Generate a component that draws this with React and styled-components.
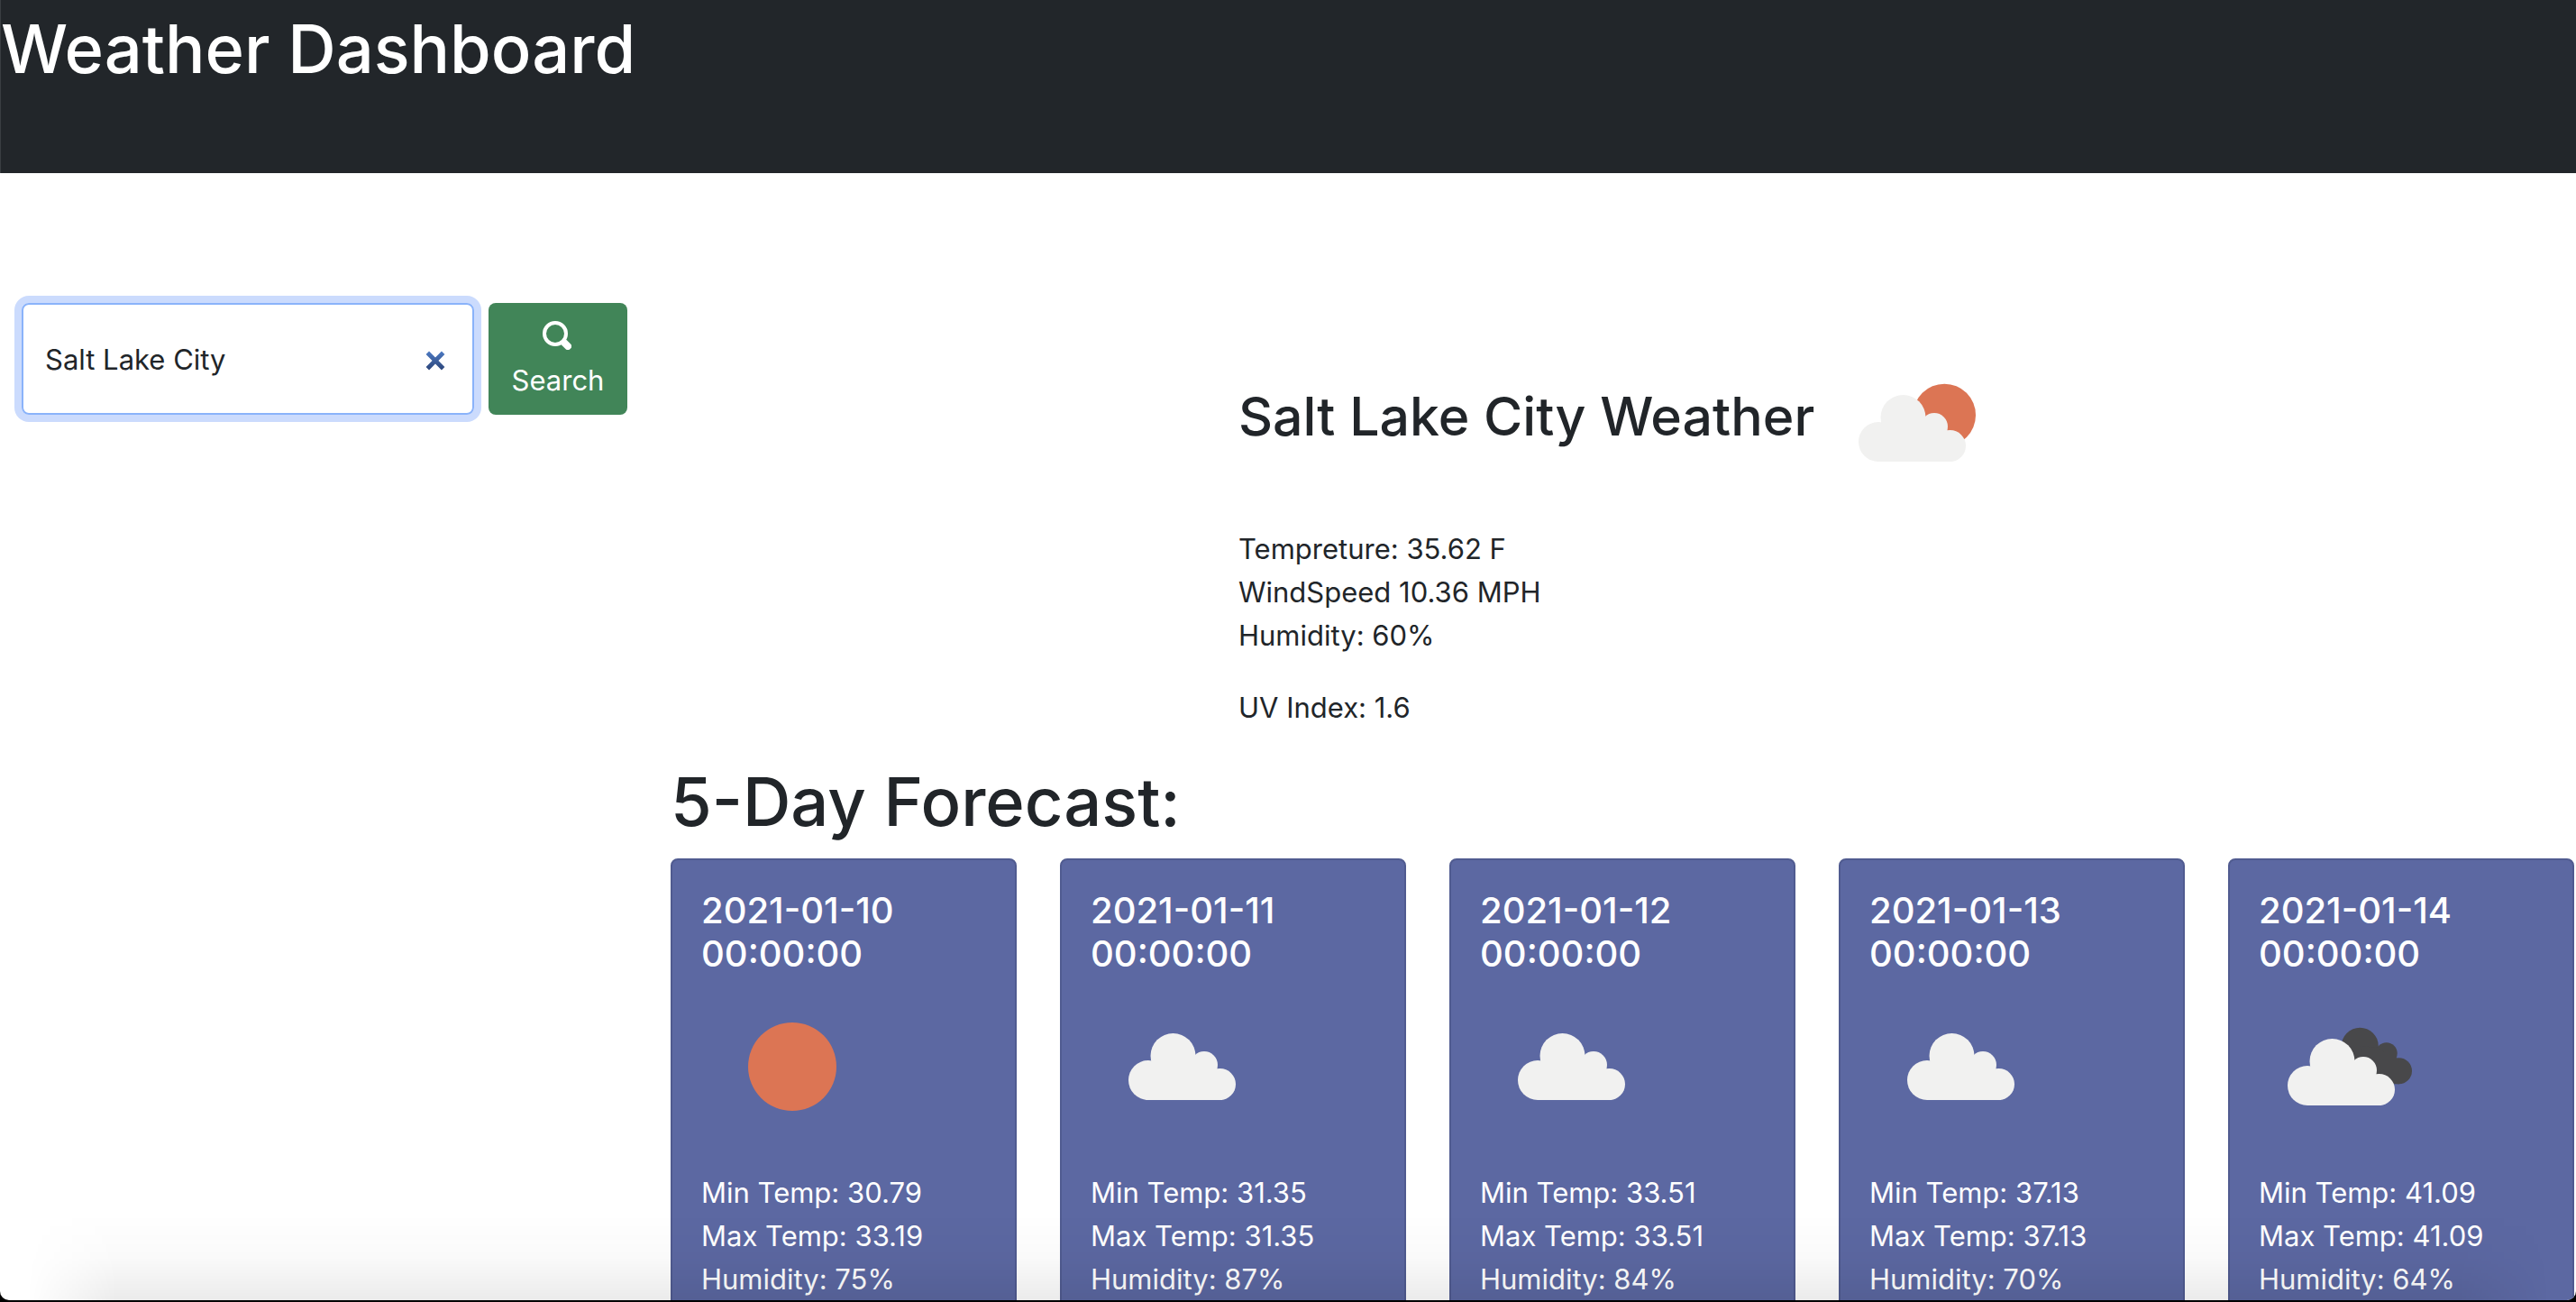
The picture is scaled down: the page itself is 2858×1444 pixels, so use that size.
import React, { useState } from "react";
import styled, { createGlobalStyle } from "styled-components";

const ink = "#212529";
const charcoal = "#22262a";

const GlobalStyle = createGlobalStyle`
  *, *::before, *::after { box-sizing: border-box; }
  body {
    margin: 0;
    background: #000;
    color: ${ink};
    font-family: Inter, "Liberation Sans", sans-serif;
    font-size: 31px;
    line-height: 48px;
  }
  h1, h2, h3, p { margin: 0; }
`;

const Window = styled.div`
  position: relative;
  height: calc(100vh - 2px);
  overflow: hidden;
  background: #fff;
  border-radius: 0 0 10px 10px;
`;

const Header = styled.header`
  height: 192px;
  padding-top: 6px;
  background: ${charcoal};
  border-left: 1px solid #3a3e42;
  color: #fff;
`;

const Heading = styled.h1`
  font-size: 74px;
  font-weight: 500;
  line-height: 96px;
`;

const Layout = styled.div`
  display: grid;
  grid-template-columns: 696px minmax(0, 1fr);
  column-gap: 24px;
  padding: 0 2px 0 24px;
`;

const SearchForm = styled.form`
  display: flex;
  align-items: stretch;
  align-self: start;
  gap: 16px;
  height: 124px;
  margin: 144px 24px 0 0;
`;

const SearchField = styled.div`
  flex: 1;
  display: flex;
  align-items: center;
  min-width: 0;
  padding: 2px 28px 0 24px;
  border: 2px solid #8ab3fa;
  border-radius: 8px;
  box-shadow: 0 0 0 8px #cbdbfd;
`;

const SearchInput = styled.input`
  flex: 1;
  min-width: 0;
  height: 48px;
  padding: 0;
  border: 0;
  outline: 0;
  background: none;
  color: ${ink};
  font: inherit;
`;

const ClearButton = styled.button`
  display: flex;
  padding: 2px 0 0;
  border: 0;
  background: none;
  cursor: pointer;
`;

const SearchButton = styled.button`
  display: flex;
  flex-direction: column;
  align-items: center;
  justify-content: center;
  width: 154px;
  padding: 0;
  border: 0;
  border-radius: 8px;
  background: #418558;
  color: #fff;
  font: inherit;
  cursor: pointer;
`;

const IconLine = styled.span`
  display: flex;
  align-items: center;
  height: 48px;
  padding: 0 2px 4px 0;
`;

const Main = styled.main`
  padding-top: 176px;
`;

const Current = styled.section`
  width: 852px;
  max-width: 100%;
  margin: 0 auto 32px;
`;

const CurrentTitle = styled.div`
  display: flex;
  align-items: center;
  gap: 17px;
  height: 200px;
  margin-bottom: 17px;
`;

const CityName = styled.h2`
  margin-bottom: 12px;
  font-size: 59px;
  font-weight: 500;
  line-height: 76px;
  white-space: nowrap;
`;

const UvIndex = styled.p`
  margin-top: 32px;
`;

const Cards = styled.div`
  display: grid;
  grid-template-columns: repeat(5, minmax(0, 1fr));
  gap: 48px;
  margin-top: 15px;
`;

const Card = styled.article`
  padding: 32px 32px 64px;
  border: 2px solid #505b90;
  border-radius: 8px;
  background: #5c68a2;
  color: #fff;
`;

const CardDate = styled.h3`
  font-size: 40px;
  font-weight: 500;
  line-height: 48px;
`;

const Picture = styled.svg`
  display: block;
  flex: none;
  width: 200px;
  height: 200px;
`;

const CardBody = styled.div`
  margin-top: 17px;
`;

const BottomShade = styled.div`
  position: absolute;
  inset: auto 0 0;
  height: 96px;
  background: linear-gradient(to bottom, rgba(0, 0, 0, 0), rgba(0, 0, 0, 0.02) 50%, rgba(0, 0, 0, 0.08));
  mask-image: linear-gradient(to right, transparent 30px, #000 130px, #000 calc(100% - 130px), transparent calc(100% - 30px));
  pointer-events: none;
`;

const Cloud = () => (
  <g fill="#f1f1f0">
    <circle cx="54" cy="122" r="22" />
    <circle cx="81.5" cy="95" r="25" />
    <circle cx="116" cy="105" r="15" />
    <circle cx="133.5" cy="126.5" r="17.5" />
    <path d="M54 144V104L64 96H104L128 108L136 114V144Z" />
  </g>
);

function WeatherPicture({ kind }) {
  return (
    <Picture viewBox="0 0 200 200" role="img" aria-label={kind}>
      {kind === "clear" && <circle cx="101" cy="101" r="49" fill="#dc7554" />}
      {kind === "few clouds" && (
        <>
          <circle cx="127.3" cy="92.4" r="34.7" fill="#dc7554" />
          <Cloud />
        </>
      )}
      {kind === "scattered clouds" && (
        <g transform="translate(10 -6)">
          <Cloud />
        </g>
      )}
      {kind === "broken clouds" && (
        <>
          <g fill="#48484a">
            <circle cx="112.3" cy="78.2" r="20.5" />
            <circle cx="141.7" cy="86.3" r="12" />
            <circle cx="155.5" cy="105.8" r="14.5" />
            <path d="M112 78L132 80L142 86L156 93V120.3H130Z" />
          </g>
          <Cloud />
        </>
      )}
    </Picture>
  );
}

const forecast = [
  { date: "2021-01-10", kind: "clear", min: "30.79", max: "33.19", humidity: 75 },
  { date: "2021-01-11", kind: "scattered clouds", min: "31.35", max: "31.35", humidity: 87 },
  { date: "2021-01-12", kind: "scattered clouds", min: "33.51", max: "33.51", humidity: 84 },
  { date: "2021-01-13", kind: "scattered clouds", min: "37.13", max: "37.13", humidity: 70 },
  { date: "2021-01-14", kind: "broken clouds", min: "41.09", max: "41.09", humidity: 64 },
];

export default function App() {
  const [city, setCity] = useState("Salt Lake City");

  return (
    <>
      <GlobalStyle />
      <Window>
        <Header>
          <Heading>Weather Dashboard</Heading>
        </Header>
        <Layout>
          <SearchForm onSubmit={(event) => event.preventDefault()}>
            <SearchField>
              <SearchInput
                type="text"
                aria-label="City"
                value={city}
                onChange={(event) => setCity(event.target.value)}
              />
              <ClearButton type="button" aria-label="Clear" onClick={() => setCity("")}>
                <svg width="26" height="26" viewBox="0 0 24 24">
                  <defs>
                    <linearGradient id="clear" gradientUnits="userSpaceOnUse" x1="0" y1="2" x2="0" y2="22">
                      <stop offset="0" stopColor="#4d7bc4" />
                      <stop offset="1" stopColor="#2b4478" />
                    </linearGradient>
                  </defs>
                  <path d="M4 4L20 20M20 4L4 20" stroke="url(#clear)" strokeWidth="4.5" />
                </svg>
              </ClearButton>
            </SearchField>
            <SearchButton type="submit">
              <IconLine>
                <svg width="32" height="32" viewBox="0 0 32 32" fill="none" stroke="#fff" strokeLinecap="round">
                  <circle cx="14" cy="14" r="12" strokeWidth="4" />
                  <path d="M24.5 24.5L28 28" strokeWidth="8" />
                </svg>
              </IconLine>
              Search
            </SearchButton>
          </SearchForm>
          <Main>
            <Current>
              <CurrentTitle>
                <CityName>Salt Lake City Weather</CityName>
                <WeatherPicture kind="few clouds" />
              </CurrentTitle>
              <p>Tempreture: 35.62 F</p>
              <p>WindSpeed 10.36 MPH</p>
              <p>Humidity: 60%</p>
              <UvIndex>UV Index: 1.6</UvIndex>
            </Current>
            <Heading as="h2">5-Day Forecast:</Heading>
            <Cards>
              {forecast.map((day) => (
                <Card key={day.date}>
                  <CardDate>{day.date} 00:00:00</CardDate>
                  <WeatherPicture kind={day.kind} />
                  <CardBody>
                    <p>Min Temp: {day.min}</p>
                    <p>Max Temp: {day.max}</p>
                    <p>Humidity: {day.humidity}%</p>
                  </CardBody>
                </Card>
              ))}
            </Cards>
          </Main>
        </Layout>
        <BottomShade />
      </Window>
    </>
  );
}
